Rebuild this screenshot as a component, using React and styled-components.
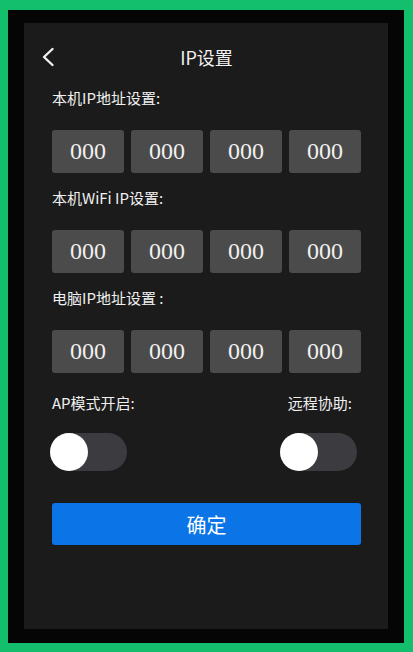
import React, { useState } from "react";
import styled, { createGlobalStyle } from "styled-components";

const GlobalStyle = createGlobalStyle`
	html, body {
		margin: 0;
		padding: 0;
		background: #13be6d;
	}
	body {
		font-family: "Noto Sans CJK SC", "Noto Sans", sans-serif;
	}
`;

const Page = styled.div`
	padding: 10px 9px 9px 8px;
	height: 652px;
	box-sizing: border-box;
`;

const Frame = styled.div`
	height: 633px;
	box-sizing: border-box;
	padding: 13px 16px 14px 16px;
	background: #050505;
`;

const Panel = styled.div`
	height: 100%;
	box-sizing: border-box;
	padding: 14px 27px 0 28px;
	background: #1b1b1b;
	color: #e6e6e6;
`;

const Header = styled.div`
	display: grid;
	grid-template-columns: 1fr auto 1fr;
	align-items: center;
	height: 40px;
	margin: 0 -11px 10px -11px;
`;

const BackButton = styled.button`
	justify-self: start;
	display: flex;
	padding: 0;
	border: 0;
	background: none;
	cursor: pointer;
`;

const Title = styled.h1`
	margin: 0;
	font-size: 18px;
	font-weight: 400;
	color: #f2f2f2;
`;

const Section = styled.div`
	margin-bottom: 14px;
`;

const Label = styled.div`
	height: 22px;
	line-height: 22px;
	font-size: 15px;
	font-weight: 400;
	color: #f0f0f0;
`;

const IpRow = styled.div`
	display: grid;
	grid-template-columns: repeat(4, 1fr);
	gap: 7px;
	margin-top: 21px;
`;

const IpBox = styled.div`
	height: 43px;
	display: flex;
	align-items: center;
	justify-content: center;
	background: #4b4b4b;
	border-radius: 3px;
	font-family: "Liberation Serif", "Times New Roman", serif;
	font-size: 24px;
	color: #f0f0f0;
`;

const SwitchRow = styled.div`
	display: flex;
	justify-content: space-between;
	padding-right: 4px;
	margin-top: 19px;
`;

const SwitchGroup = styled.div`
	display: flex;
	flex-direction: column;
	align-items: ${(p) => (p.$right ? "flex-end" : "flex-start")};
	gap: 19px;
`;

const SwitchLabel = styled(Label)`
	margin-right: ${(p) => (p.$right ? "5px" : "0")};
`;

const Track = styled.div`
	width: 77px;
	height: 38px;
	border-radius: 19px;
	background: #3c3c40;
	display: flex;
	justify-content: ${(p) => (p.$on ? "flex-end" : "flex-start")};
	cursor: pointer;
	margin-left: ${(p) => (p.$right ? "0" : "-2px")};
`;

const Knob = styled.div`
	width: 38px;
	height: 38px;
	border-radius: 50%;
	background: #ffffff;
`;

const Confirm = styled.button`
	display: block;
	width: 100%;
	height: 42px;
	margin-top: 32px;
	border: 0;
	border-radius: 3px;
	background: #0b75e8;
	color: #ffffff;
	font-family: "Noto Sans CJK SC", "Noto Sans", sans-serif;
	font-size: 20px;
	cursor: pointer;
`;

const sections = ["本机IP地址设置:", "本机WiFi IP设置:", "电脑IP地址设置 :"];

function Toggle({ right }) {
	const [on, setOn] = useState(false);
	return (
		<Track $on={on} $right={right} onClick={() => setOn(!on)}>
			<Knob />
		</Track>
	);
}

export default function App() {
	return (
		<Page>
			<GlobalStyle />
			<Frame>
				<Panel>
					<Header>
						<BackButton aria-label="back">
							<svg width="14" height="20" viewBox="0 0 14 20">
								<path
									d="M11.5 2 L3 10 L11.5 18"
									fill="none"
									stroke="#f2f2f2"
									strokeWidth="2.4"
									strokeLinecap="round"
									strokeLinejoin="round"
								/>
							</svg>
						</BackButton>
						<Title>IP设置</Title>
						<span />
					</Header>
					{sections.map((label) => (
						<Section key={label}>
							<Label>{label}</Label>
							<IpRow>
								{[0, 1, 2, 3].map((i) => (
									<IpBox key={i}>000</IpBox>
								))}
							</IpRow>
						</Section>
					))}
					<SwitchRow>
						<SwitchGroup>
							<SwitchLabel>AP模式开启:</SwitchLabel>
							<Toggle />
						</SwitchGroup>
						<SwitchGroup $right>
							<SwitchLabel $right>远程协助:</SwitchLabel>
							<Toggle right />
						</SwitchGroup>
					</SwitchRow>
					<Confirm>确定</Confirm>
				</Panel>
			</Frame>
		</Page>
	);
}
